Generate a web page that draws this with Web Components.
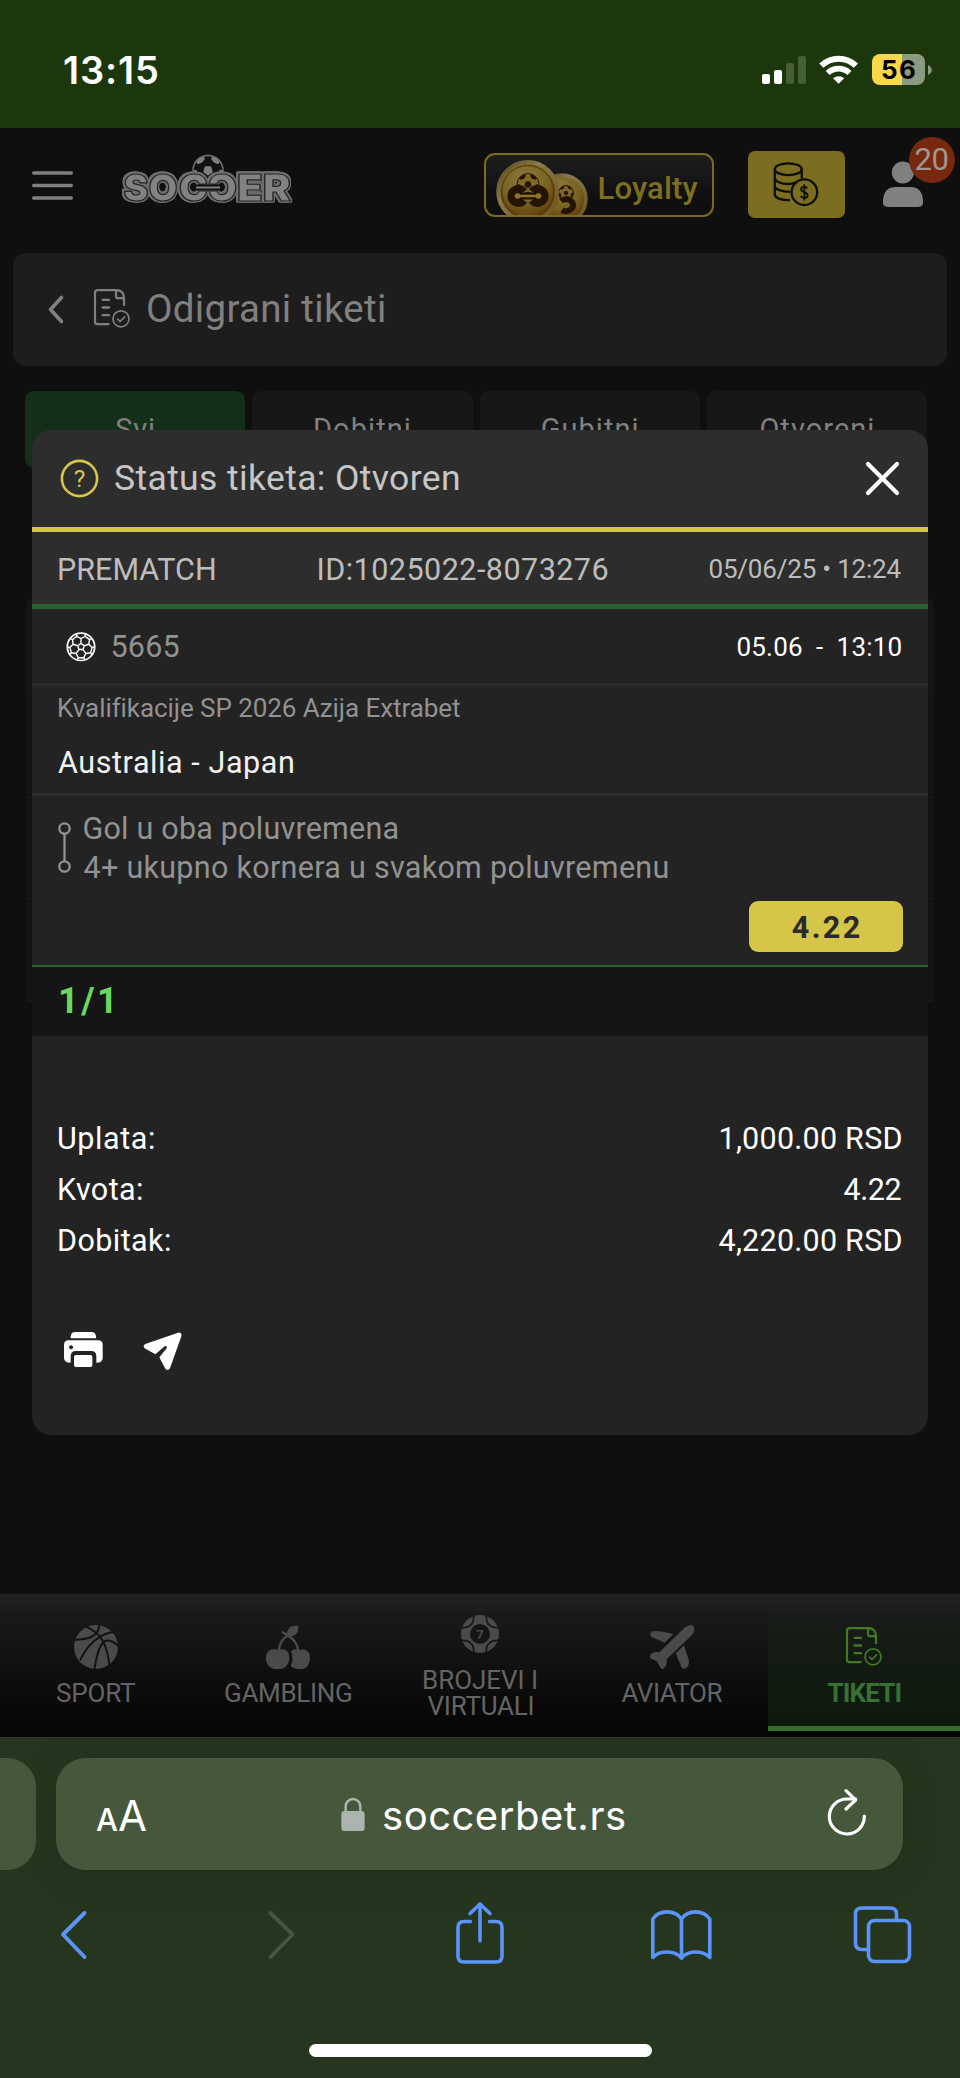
<!DOCTYPE html>
<html lang="sr">
<head>
<meta charset="utf-8">
<title>Odigrani tiketi</title>
<style>
html,body{margin:0;padding:0;background:#0f0f0f}
body{width:960px;height:2078px;overflow:hidden;font-family:Roboto,"Liberation Sans",sans-serif}
</style>
</head>
<body>
<ticket-app></ticket-app>
<script>
const base = `*{box-sizing:border-box}svg{display:block;flex:none;overflow:visible}`;
function define(name, css, html){
  customElements.define(name, class extends HTMLElement{
    constructor(){
      super();
      const t = document.createElement('template');
      t.innerHTML = `<style>${base}${css}</style>${html}`;
      this.attachShadow({mode:'open'}).append(t.content.cloneNode(true));
    }
  });
}
const rad = Math.PI/180;
const pt = (cx,cy,r,a)=>`${(cx+r*Math.sin(a*rad)).toFixed(2)} ${(cy-r*Math.cos(a*rad)).toFixed(2)}`;
/* Seams of a football: centre pentagon, spokes and the partial outer pentagons. */
function seams(cx,cy,R,flip=0){
  let d='';
  for(let i=0;i<5;i++){
    const a=i*72+flip, p=(r,o)=>pt(cx,cy,R*r,a+o);
    d+=`M${p(.25,0)}L${p(.25,72)}M${p(.25,0)}L${p(.6,0)}M${p(.98,-19)}L${p(.82,-22)}L${p(.6,0)}L${p(.82,22)}L${p(.98,19)}M${p(.82,22)}L${p(.82,50)}`;
  }
  return d;
}
/* Solid patches of a football: centre pentagon and five at the rim. */
function patches(cx,cy,R){
  let d='';
  const poly=a=>'M'+a.join('L')+'Z';
  d+=poly([0,72,144,216,288].map(a=>pt(cx,cy,R*.34,a+36)));
  for(let i=0;i<5;i++){const a=i*72+36;d+=poly([pt(cx,cy,R*.66,a),pt(cx,cy,R*.8,a+22),pt(cx,cy,R*.97,a+18),pt(cx,cy,R*.99,a),pt(cx,cy,R*.97,a-18),pt(cx,cy,R*.8,a-22)]);}
  return d;
}
const docIcon = (w,h)=>`<svg width="${w}" height="${h}" viewBox="280 147 108 116" fill="none" stroke="currentColor" stroke-width="6.5" stroke-linecap="round" stroke-linejoin="round"><path d="M324 252H290Q283 252 283 245V158Q283 150 291 150H349Q370 152 370 174V195M346 151V168Q346 174 352 174H370"/><path d="M306 179H325M306 202H325M306 225H325" stroke-width="7"/><circle cx="361" cy="236" r="24" stroke-width="5"/><path d="M351 237L358 244L372 230" stroke-width="5"/></svg>`;

define('phone-status',`
:host{display:flex;height:128px;background:#1c370b;padding:54px 28px 0 64px;align-items:flex-start;font-family:Inter,sans-serif;color:#fff}
ui-text{font-size:38px;font-weight:600;line-height:32px}
.r{display:flex;margin-left:auto}
.bat{width:53px;height:31px;border-radius:8px;background:linear-gradient(90deg,#fbd849 0 30px,#8a9b81 30px);margin-left:14px;display:flex;justify-content:center;color:#000}
.bat ui-text{font-size:26px;font-weight:700;line-height:31px}
`,`<ui-text w="93">13:15</ui-text><div class="r">
<svg width="44" height="31" viewBox="762 54 44 31" fill="#fff"><rect x="762" y="74" width="8" height="10" rx="2"/><rect x="774" y="70" width="8" height="14" rx="2"/><g fill="#466034"><rect x="786" y="63" width="8" height="21" rx="2.3"/><rect x="798" y="56" width="8" height="28" rx="2.3"/></g></svg>
<svg style="margin-left:13px" width="39" height="31" viewBox="819 54 39 31" fill="none" stroke="#fff" stroke-width="6"><path d="M821.3 65.7a25 25 0 0 1 34.6 0"/><path d="M827.7 73a16 16 0 0 1 21.8 0" stroke-width="5.8"/><path d="M838.6 83.8L833 78.2a8.6 8.6 0 0 1 11.2 0Z" fill="#fff" stroke="none"/></svg>
<div class="bat"><ui-text w="33">56</ui-text></div>
<svg style="margin:11px 0 0 3px" width="4" height="10" viewBox="0 0 4 10"><path d="M0 0C5 2 5 8 0 10Z" fill="#8a9b81"/></svg></div>`);

define('site-header',`
:host{display:flex;height:125px;background:#0f0f0f;padding-left:32px;align-items:flex-start}
.logo{filter:drop-shadow(0 1.1px 0 #6e6e6e) drop-shadow(0 -1.1px 0 #6e6e6e) drop-shadow(1.1px 0 0 #6e6e6e) drop-shadow(-1.1px 0 0 #6e6e6e)}
.loy{width:230px;height:64px;margin:25px 0 0 191px;border:2.5px solid #7b6d1e;border-radius:11px;background:linear-gradient(#1d1d1d,#0f0f0f 75%);display:flex;overflow:hidden}
.loy ui-text{font-size:31px;font-weight:500;color:#7d6f1f;line-height:66px;padding-top:1px;margin-left:12px}
.pay{width:97px;height:67px;margin:23px 0 0 34px;border-radius:7px;background:#7c6e20;padding:11px 0 0 25px}
.usr{position:relative;width:77px;margin:9px 0 0 38px;height:75px}
.bdg{position:absolute;left:25.500px;top:0;width:46px;height:46px;border-radius:50%;background:#77280e;color:#a19690;display:flex;justify-content:center;font-size:31px;line-height:46px}
`,`
<svg style="margin-top:43px" width="41" height="29" viewBox="0 0 41 29" stroke="#808080" stroke-width="3.4" stroke-linecap="round"><path d="M1.7 2H39.3M1.7 14.5H39.3M1.7 27H39.3"/></svg>
<svg style="margin:27px 0 0 49px" width="171" height="48" viewBox="122 155 171 48">
<circle cx="208" cy="170.5" r="15" fill="#111" stroke="#737373" stroke-width="1.5"/><path d="${patches(208,170.5,15)}" fill="#808080"/>
<g class="logo" font-family="Inter,sans-serif" font-weight="900" font-size="37" fill="#828282" stroke="#262626" stroke-width="1.200"><text x="123.500" y="201" textLength="54" lengthAdjust="spacingAndGlyphs">SO</text><text x="179" y="201" textLength="29" lengthAdjust="spacingAndGlyphs">C</text><text transform="translate(237 0) scale(-1 1)" x="0" y="201" textLength="29" lengthAdjust="spacingAndGlyphs">C</text><text x="237" y="201" textLength="54" lengthAdjust="spacingAndGlyphs">ER</text></g>
<path d="M194 187.5H222" stroke="#111" stroke-width="6"/><path d="M196 187.5H220" stroke="#808080" stroke-width="2"/></svg>
<div class="loy"><svg style="margin:4.5px 0 0 9.5px" width="92" height="55" viewBox="496 160 92 55">
<defs><radialGradient id="g" cx=".45" cy=".3" r=".75"><stop offset="0" stop-color="#8f7a40"/><stop offset=".55" stop-color="#77611e"/><stop offset="1" stop-color="#5b2d08"/></radialGradient><linearGradient id="e" x2="1" y2="1"><stop offset="0" stop-color="#544216"/><stop offset=".35" stop-color="#8a7a50"/><stop offset="1" stop-color="#6b5118"/></linearGradient></defs>
<circle cx="562" cy="199" r="24" fill="url(#g)" stroke="url(#e)" stroke-width="3.5"/><circle cx="566" cy="193" r="7.500" fill="#80682b" stroke="#251303"/><path d="${patches(566,193,7.5)}" fill="#251303"/><path d="M561 201a7 6 0 1 1 1 9" fill="none" stroke="#251303" stroke-width="6"/>
<circle cx="527.7" cy="191.500" r="29.500" fill="url(#g)" stroke="url(#e)" stroke-width="4"/><circle cx="527.7" cy="191.500" r="26" fill="none" stroke="#513407" stroke-width="1"/>
<circle cx="528" cy="184.500" r="11" fill="#80682b" stroke="#251303"/><path d="${patches(528,184.5,11)}" fill="#251303"/>
<g fill="none" stroke="#251303" stroke-width="9"><path d="M523.500 192a6.500 6.500 0 1 0 0 8M532.500 192a6.500 6.500 0 1 1 0 8"/></g><path d="M519 196H537" stroke="#251303" stroke-width="7"/><path d="M517 196H539" stroke="#91752e" stroke-width="2.500"/><circle cx="517.500" cy="196" r="2.800" fill="#91752e"/><circle cx="538.500" cy="196" r="2.800" fill="#91752e"/></svg>
<ui-text w="98">Loyalty</ui-text></div>
<div class="pay"><svg width="46" height="44" viewBox="940 485 137 134" fill="none" stroke="#0e0e06" stroke-width="7"><ellipse cx="985" cy="507" rx="41" ry="18"/><path d="M944 507V583C944 594 962 602 990 601M1026 507V535M944 532C944 544 962 552 985 552Q997 552 1007 548M944 558C944 568 966 576 990 576"/><circle cx="1034" cy="577" r="39"/><path d="M1034 553V602M1043 566C1039 558 1024 559 1024 568C1024 579 1044 574 1044 586C1044 596 1027 598 1023 588" stroke-width="5.5"/></svg></div>
<div class="usr"><svg style="position:relative;top:25px" width="41" height="46" viewBox="883 162 41 46" fill="#808080"><circle cx="902.800" cy="172.500" r="11"/><path d="M883 200Q884 187 896 187H910Q922 187 923 200V203Q923 207 917 207H889Q883 207 883 203Z"/></svg><div class="bdg"><ui-text w="32">20</ui-text></div></div>`);

define('page-title',`
:host{display:flex;height:113px;margin:0 13px;background:#1d1d1d;border-radius:13px;padding:0 0 0 36px;color:#808080}
ui-text{font-size:38.500px;line-height:112px;margin-left:18px}
`,`<svg style="margin-top:43px" width="14" height="27" viewBox="0 0 14 27" fill="none" stroke="currentColor" stroke-width="3.600" stroke-linecap="round" stroke-linejoin="round"><path d="M12.500 1.500L1.500 13.500L12.500 25.500"/></svg><div style="margin:36px 0 0 31px">${docIcon(36,39)}</div><ui-text w="236">Odigrani tiketi</ui-text>`);

define('filter-tabs',`
:host{display:grid;grid-template-columns:repeat(4,1fr);gap:7px;height:77px;margin:25px 33px 0 25px;color:#808080;font-size:29px}
div{background:#171717;border-radius:9px;display:flex;justify-content:center;line-height:76px}
div:first-of-type{background:#142f17}
`,`<div><ui-text w="38">Svi</ui-text></div><div><ui-text w="95">Dobitni</ui-text></div><div><ui-text w="96">Gubitni</ui-text></div><div><ui-text w="113">Otvoreni</ui-text></div>`);

define('ticket-list',`
:host{display:block;margin:129px 26px 0;height:405px}
div{height:102px;background:#121212;border-bottom:2px solid #171717}
div:first-of-type{height:99px;background:#151515;border-radius:10px 10px 0 0;border:0}
`,`<div></div><div></div><div></div><div></div>`);

define('ticket-modal',`
:host{display:flex;flex-direction:column;width:896px;height:1005px;background:#232323;border-radius:19px;overflow:hidden;color:#bdbdbd;font-size:30.500px}
.row{display:flex}
.hd{height:102px;background:#2d2d2d;border-bottom:5px solid #d5c548;padding:0 29.500px 0 28px}
.hd ui-text{font-size:35.500px;line-height:97px;margin-left:16px;color:#c6c6c6}
.meta{height:77px;background:#2d2d2d;border-bottom:5px solid #2a612d;padding:0 26.500px 0 27px;line-height:75px}
.sm{font-size:26px}.push{margin-left:auto}
.ev{height:77px;border-bottom:3px solid #2d2d2d;padding:0 26.500px 0 33.500px;line-height:76px}
.ev .n{margin-left:17px;color:#929292}.w{color:#fff}
.lg{height:110px;border-bottom:3px solid #2d2d2d;padding:0 27px}
.lg .sm{line-height:44px;color:#929292}.lg .t{line-height:65px;color:#f2f2f2;margin-left:-1px}
.bets{height:171px;border-bottom:2px solid #2a612d;padding:14px 25.500px 0 26px;color:#929292}
.bets .l{line-height:38.500px}
.odd{width:153.500px;height:51px;margin:14px 0 0 auto;background:#d5c548;border-radius:9px;display:flex;justify-content:center;line-height:53px;color:#2a2a2a;font-weight:700}
.cnt{height:69px;background:#151515;padding-left:28px;font-size:36px;font-weight:700;color:#6cd75f;line-height:69px}
.sum{padding:77px 26.500px 0 27px;color:#fff}
.sum .row{height:51px;line-height:52px;justify-content:space-between}
.act{display:flex;padding:66px 0 0 32px}
`,`
<div class="row hd"><svg style="margin-top:29px" width="39" height="39" viewBox="60 459.500 39 39" fill="none" stroke="#d5c548"><circle cx="79.500" cy="479" r="17.600" stroke-width="2.600"/><text x="79.600" y="487.800" text-anchor="middle" font-family="Roboto,sans-serif" font-weight="400" font-size="24.500" fill="#d5c548" stroke="none">?</text></svg><ui-text w="344">Status tiketa: Otvoren</ui-text><svg class="push" style="margin-top:32px" width="33" height="33" viewBox="0 0 33 33" stroke="#fff" stroke-width="4.200" stroke-linecap="round"><path d="M2 2L31 31M31 2L2 31"/></svg></div>
<div class="row meta"><ui-text w="156">PREMATCH</ui-text><ui-text style="margin-left:103.500px" w="289">ID:1025022-8073276</ui-text><ui-text class="sm push" w="192">05/06/25 • 12:24</ui-text></div>
<div class="row ev"><svg style="margin-top:23px" width="30" height="30" viewBox="66 632 30 30" fill="none" stroke="#fff" stroke-width="1.400"><circle cx="81" cy="646.800" r="13.700" stroke-width="1.700"/><path d="${seams(81,646.8,13.7)}"/></svg><ui-text class="n" w="66">5665</ui-text><ui-text class="sm push w" w="164">05.06&nbsp; -&nbsp; 13:10</ui-text></div>
<div class="lg"><ui-text class="sm" w="401">Kvalifikacije SP 2026 Azija Extrabet</ui-text><ui-text class="t" w="235">Australia - Japan</ui-text></div>
<div class="bets"><div class="row"><svg style="margin:11.500px 12.500px 0 0" width="13" height="52" viewBox="0 0 13 52" fill="none" stroke="currentColor" stroke-width="2.300"><circle cx="6.500" cy="6.500" r="5.200"/><circle cx="6.500" cy="44.500" r="5.200"/><path d="M6.500 12V39"/></svg><div class="l"><ui-text w="314">Gol u oba poluvremena</ui-text><ui-text w="584">4+ ukupno kornera u svakom poluvremenu</ui-text></div></div><div class="odd"><ui-text w="68">4.22</ui-text></div></div>
<div class="cnt"><ui-text w="52">1/1</ui-text></div>
<div class="sum"><div class="row"><ui-text w="95">Uplata:</ui-text><ui-text w="181">1,000.00 RSD</ui-text></div><div class="row"><ui-text w="83">Kvota:</ui-text><ui-text w="58">4.22</ui-text></div><div class="row"><ui-text w="111">Dobitak:</ui-text><ui-text w="183">4,220.00 RSD</ui-text></div></div>
<div class="act"><svg width="38.700" height="35" viewBox="192 697 116 105" fill="#fff"><path d="M212 716V710Q213 697 226 697H274Q287 697 288 710V716Z"/><path fill-rule="evenodd" d="M206 722H294Q308 722 308 736V775Q308 789 289 789V770Q289 754 273 754H228Q212 754 212 770V789Q192 789 192 775V736Q192 722 206 722ZM213 737a6 6 0 1 0 .1 0Z"/><rect x="222" y="766" width="55" height="36" rx="6"/></svg>
<svg style="margin-left:40.500px" width="38.700" height="38.700" viewBox="430 697 116 116"><path d="M437 733L535 699Q547 697 545 710L511 806Q504 816 496 806L479 773L501 746Q504 737 495 740L467 764L435 746Q428 738 437 733Z" fill="#fff"/></svg></div>`);

define('bottom-nav',`
:host{display:grid;grid-template-columns:repeat(5,1fr);height:144px;background:linear-gradient(#212121,#191919 15%,#101010 50%,#070707 88%,#060606);border-top:1px solid #222;border-bottom:1.500px solid #30352c;font-size:26px;color:#646464}
.i{display:flex;flex-direction:column;align-items:center}
svg{color:#4a4a4a}
.i>ui-text{line-height:30px}
.on{background:linear-gradient(rgba(25,60,25,0),rgba(25,60,25,.35) 80%);height:135.500px;border-bottom:5px solid #386a2e;color:#397034;font-weight:700}
`,`
<div class="i"><svg style="margin-top:30px" width="44" height="44" viewBox="222 134 132 132"><circle cx="288" cy="200" r="66" fill="currentColor"/><g fill="none" stroke="#121212" stroke-width="6"><path d="M258 139C300 157 322 184 330 268M224 178C264 178 296 170 298 132M240 240C260 197 296 159 344 154M283 268C288 230 300 190 313 183Q330 174 358 199"/></g></svg><ui-text style="margin-top:9px" w="78">SPORT</ui-text></div>
<div class="i"><svg style="margin-top:30px" width="44" height="44" viewBox="798 134 132 132" fill="currentColor"><path d="M833 210C842 205 868 203 868 233C868 252 855 266 840 266H826C810 266 798 252 798 234C798 203 825 205 833 210ZM897 210C905 205 930 206 930 232C930 254 917 266 904 266H892Q882 266 872 257Q883 235 873 213Q884 203 897 210Z"/><path d="M836 212Q838 181 863 165Q891 182 895 212M848 156L868 168" fill="none" stroke="currentColor" stroke-width="7" stroke-linecap="round"/><path d="M861 162Q862 132 896 137Q895 171 866 168Z"/></svg><ui-text style="margin-top:9px" w="126">GAMBLING</ui-text></div>
<div class="i"><svg style="margin-top:20px" width="38" height="38" viewBox="-57 -57 114 114"><circle r="57" fill="currentColor"/><circle r="30" fill="#151515"/><g fill="none" stroke="#151515" stroke-width="5"><path d="M19 -56Q17 -17 56 -19M-19 -56Q-17 -17 -56 -19M-19 56Q-17 17 -56 19M19 56Q17 17 56 19"/></g><text y="14" text-anchor="middle" font-family="Roboto,sans-serif" font-weight="700" font-size="39" fill="currentColor">7</text></svg><ui-text style="margin-top:13.500px;line-height:26px" w="112">BROJEVI I</ui-text><ui-text style="line-height:26px" w="105">VIRTUALI</ui-text></div>
<div class="i"><svg style="margin-top:30px" width="44" height="44" viewBox="510 134 132 132" fill="currentColor"><path d="M616 140Q640 127 642 142Q645 156 632 168L560 237Q562 258 550 265Q543 269 538 256L530 242L515 236Q506 231 513 221Q520 213 538 216Z"/><path d="M515 154Q526 147 580 161L554 187L515 170Q507 161 515 154ZM612 195L627 242Q627 262 613 266L605 262L587 219Z"/></svg><ui-text style="margin-top:9px" w="101">AVIATOR</ui-text></div>
<div class="i on"><div style="margin-top:32px;height:42px">${docIcon(36,39).replace('<svg','<svg style="color:#427a25"')}</div><ui-text style="margin-top:9px" w="73">TIKETI</ui-text></div>`);

define('browser-bar',`
:host{display:block;height:340px;background:#26361e;font-family:Inter,sans-serif;color:#fff;overflow:hidden}
.tabs{display:flex;padding-top:20px;height:132px}
.prev{width:35.500px;background:#46583c;border-radius:0 29px 29px 0;margin-right:20.500px}
.url{width:847px;background:#46583c;border-radius:30px;display:flex;padding-left:40px;box-shadow:0 4px 40px rgba(0,0,0,.18)}
.aa{display:flex;align-items:baseline;line-height:115px}
.tools{display:flex;padding:30px 0 0 61px;align-items:flex-start;color:#5b94f8;height:174px}
.home{width:343px;height:13px;border-radius:7px;background:#fff;margin:0 0 0 309px}
`,`
<div class="tabs"><div class="prev"></div><div class="url"><div class="aa"><ui-text style="font-size:31px;font-weight:500" w="19">A</ui-text><ui-text style="font-size:42px;margin-left:4px" w="26">A</ui-text></div>
<svg style="margin:40px 0 0 196px" width="24" height="33" viewBox="1023 654 70 99"><rect x="1023" y="693" width="70" height="60" rx="10" fill="#abb4ae"/><path d="M1036 697V679A22 22 0 0 1 1080 679V697" fill="none" stroke="#abb4ae" stroke-width="7.500"/></svg>
<ui-text style="font-size:40px;line-height:115px;margin-left:19px" w="241">soccerbet.rs</ui-text>
<svg style="margin:31px 0 0 202.500px" width="38" height="47" viewBox="1045 630 114 139" fill="none" stroke="#fff" stroke-width="9.500" stroke-linecap="round" stroke-linejoin="round"><path d="M1154 710A52.500 52.500 0 1 1 1102 659H1128M1099 634L1128 662L1099 689"/></svg></div></div>
<div class="tools">
<svg style="margin-top:11px" width="25" height="48" viewBox="61 1911 25 48" fill="none" stroke="currentColor" stroke-width="3.900" stroke-linecap="round" stroke-linejoin="round"><path d="M84.500 1913L63 1934.500L84.500 1957"/></svg>
<svg style="margin:11px 0 0 183px" width="25" height="48" viewBox="269 1911 25 48" fill="none" stroke="#48543f" stroke-width="3.900" stroke-linecap="round" stroke-linejoin="round"><path d="M270.500 1913L292.500 1934.500L270.500 1957"/></svg>
<svg style="margin:2px 0 0 161.500px" width="48" height="62" viewBox="456 1902 48 62" fill="none" stroke="currentColor" stroke-width="3.600" stroke-linecap="round" stroke-linejoin="round"><path d="M470.500 1921.500H464Q458 1921.500 458 1927.500V1956Q458 1962 464 1962H496Q502 1962 502 1956V1927.500Q502 1921.500 496 1921.500H489.500M480 1941V1904M470 1913.500L480 1904L490 1913.500"/></svg>
<svg style="margin:10px 0 0 147px" width="61" height="50" viewBox="651 1910 61 50" fill="none" stroke="currentColor" stroke-width="3.600" stroke-linecap="round" stroke-linejoin="round"><path d="M681.500 1919C675 1909.500 659 1909.500 652.800 1919V1957.500C659 1950 675 1950 681.500 1958C688 1950 703 1950 709.800 1957.500V1919C703 1909.500 688 1909.500 681.500 1919V1957"/></svg>
<svg style="margin:6px 0 0 142.500px" width="57" height="57" viewBox="855 1906 57 57" fill="none" stroke="currentColor" stroke-width="3.600"><path d="M868 1949.500H863Q856.500 1949.500 856.500 1943V1914Q856.500 1908 863 1908H891Q897.500 1908 897.500 1914V1920"/><rect x="869.500" y="1920.500" width="41" height="41" rx="6"/></svg></div>
<div class="home"></div>`);

define('ticket-app',`
:host{display:block;width:960px;height:2078px}
main{position:relative;height:1466px;background:#0f0f0f;overflow:hidden}
ticket-modal{position:absolute;left:32px;top:302px}
`,`<phone-status></phone-status><main><site-header></site-header><page-title></page-title><filter-tabs></filter-tabs><ticket-list></ticket-list><ticket-modal></ticket-modal></main><bottom-nav></bottom-nav><browser-bar></browser-bar>`);

/* Text whose box is its inked width: tracking is adjusted to fill "w" pixels. */
customElements.define('ui-text', class extends HTMLElement{
  constructor(){
    super();
    this.attachShadow({mode:'open'}).innerHTML='<style>:host{display:block;flex:none;white-space:pre}span{display:block;width:max-content}</style><span><slot></slot></span>';
  }
  connectedCallback(){
    const w=+this.getAttribute('w'), s=this.shadowRoot.querySelector('span'), cs=getComputedStyle(this);
    const c=document.createElement('canvas').getContext('2d');
    c.font=`${cs.fontWeight} ${cs.fontSize} ${cs.fontFamily}`;
    const t=this.textContent, m=c.measureText(t), n=t.length-1;
    const bearings=m.width-m.actualBoundingBoxRight-m.actualBoundingBoxLeft;
    this.style.width=w+'px';
    if(n>0){
      /* Measured with tracking on, since tracking turns ligatures off. */
      s.style.letterSpacing='0.01px';
      const ink=s.getBoundingClientRect().width-bearings;
      s.style.letterSpacing=(.01+(w-ink)/n).toFixed(3)+'px';
    }
    s.style.marginLeft=m.actualBoundingBoxLeft.toFixed(2)+'px';
  }
});
</script>
</body>
</html>
